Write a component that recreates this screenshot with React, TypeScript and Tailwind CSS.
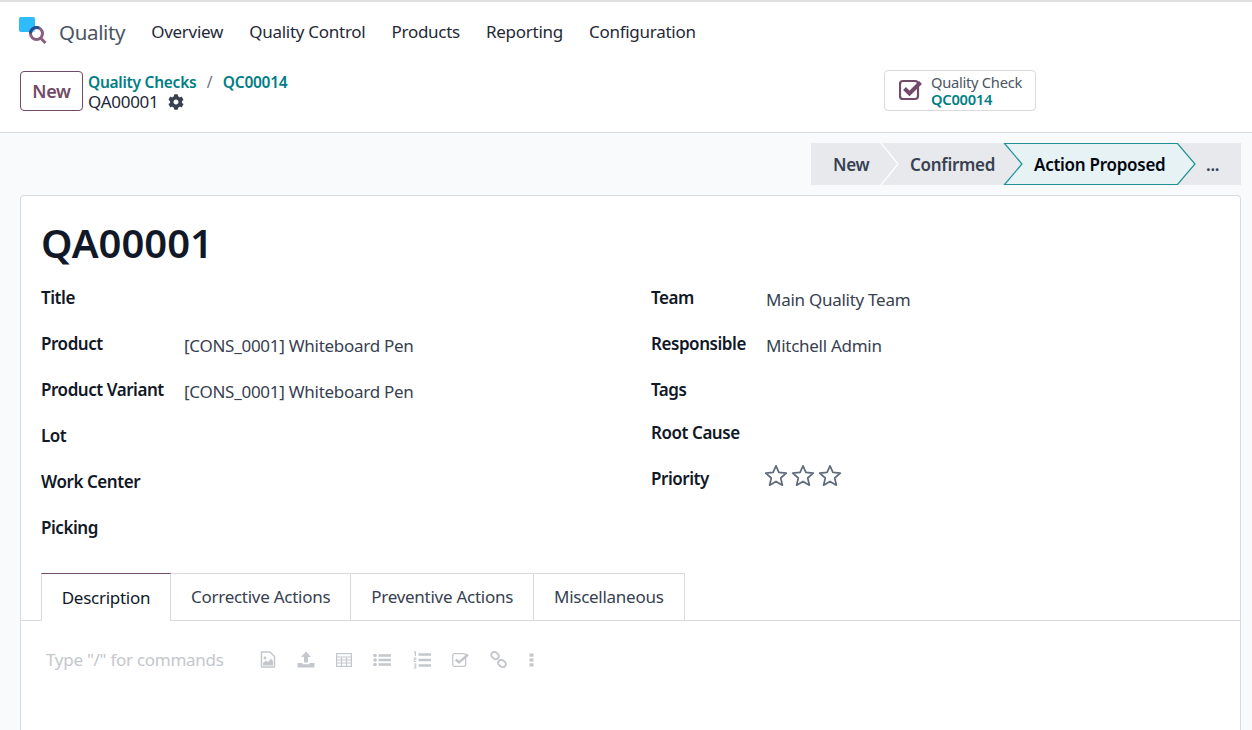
import { FaCog } from "react-icons/fa";

const menu = ["Overview", "Quality Control", "Products", "Reporting", "Configuration"];
const tabs = ["Corrective Actions", "Preventive Actions", "Miscellaneous"];

function Logo() {
  return (
    <svg width="30" height="30" viewBox="0 0 30 30" className="shrink-0">
      <path d="M2 0 H14 Q16 0 16 2 V15 H2 Q0 15 0 13 V2 Q0 0 2 0 Z" fill="#2ebcfa" />
      <circle cx="17.500" cy="16.500" r="6.500" fill="#fff" />
      <path d="M11 16.500 A6.500 6.500 0 0 1 16 10.200 L16 15 L11 15 Z" fill="#9adcf8" />
      <circle cx="17.500" cy="16.500" r="6" fill="none" stroke="#8b5e80" strokeWidth="3" />
      <path d="M11.500 16.500 A6 6 0 0 1 20 11" fill="none" stroke="#1f4f96" strokeWidth="3" />
      <path d="M22 21.500 L26.500 26" stroke="#8b5e80" strokeWidth="3" />
    </svg>
  );
}

function CheckBoxIcon() {
  return (
    <svg width="24" height="23" viewBox="0 0 24 23" className="-mt-[3px] shrink-0">
      <rect x="1" y="3" width="18" height="18" rx="3" fill="none" stroke="#714b67" strokeWidth="2.200" />
      <path d="M5.500 10.500 L10.500 15.500 L21.500 4.500" fill="none" stroke="#714b67" strokeWidth="4" />
    </svg>
  );
}

function Star() {
  return (
    <svg width="24" height="23" viewBox="0 0 24 23">
      <path d="M12 1.800 L14.900 8.400 L22.300 9.100 L16.700 14 L18.400 21.200 L12 17.400 L5.600 21.200 L7.300 14 L1.700 9.100 L9.100 8.400 Z" fill="none" stroke="#5f6b7a" strokeWidth="1.700" strokeLinejoin="round" />
    </svg>
  );
}

function Field({ label, value, left, h }: { label: string; value?: string; left: string; h: string }) {
  return (
    <div className={`flex ${h}`}>
      <div className={`${left} shrink-0 font-semibold tracking-[-0.45px] text-[#111827]`}>{label}</div>
      {value && <div className="pt-[2px] text-[#374151]">{value}</div>}
    </div>
  );
}

function StatusBar() {
  return (
    <div className="flex justify-end pr-[11px] pt-[10px]">
      <div className="relative flex h-[42px] w-[430px] items-center bg-[#e7e9ed] pt-[2px] text-[17px] font-semibold text-[#374151]">
        <svg width="430" height="42" viewBox="0 0 430 42" className="absolute left-0 top-0">
          <path d="M70 0 L87 21 L70 42" fill="none" stroke="#fff" strokeWidth="1.2" />
          <path d="M193.500 0.500 L366.500 0.500 L384 21 L366.500 41.500 L193.500 41.500 L211 21 Z" fill="#e6f2f3" stroke="#1f9297" strokeWidth="1.2" />
        </svg>
        <span className="relative ml-[22px] w-[77px]">New</span>
        <span className="relative w-[124px]">Confirmed</span>
        <span className="relative w-[172px] text-[#030712]">Action Proposed</span>
        <span className="relative">...</span>
      </div>
    </div>
  );
}

function EditorIcons() {
  return (
    <div className="flex items-center text-[#c4c7cc]">
      <svg width="16" height="17" viewBox="0 0 16 17" fill="none">
        <path d="M1.500 1 H10 L14.500 5.500 V16 H1.500 Z" stroke="currentColor" strokeWidth="1.500" />
        <path d="M3 14.500 V12 L6 9.500 L8 11 L11 7.500 L13 10 V14.500 Z" fill="currentColor" />
        <circle cx="5" cy="7" r="1.400" fill="currentColor" />
      </svg>
      <svg width="18" height="17" viewBox="0 0 18 17" className="ml-[21px]" fill="currentColor">
        <path d="M9 0.500 L14 6 H11 V11.500 H7 V6 H4 Z" />
        <path d="M0.500 12 H5.500 V13.200 H12.500 V12 H17.500 V16.500 H0.500 Z" />
      </svg>
      <svg width="16" height="14" viewBox="0 0 16 14" className="ml-[21px]" fill="none" stroke="currentColor" strokeWidth="1.200">
        <rect x="0.600" y="0.600" width="14.800" height="12.800" />
        <path d="M0.600 4 H15.400 M0.600 7 H15.400 M0.600 10 H15.400 M5.500 4 V13.400 M10.500 4 V13.400" />
      </svg>
      <svg width="18" height="14" viewBox="0 0 18 14" className="ml-[21px]" fill="currentColor">
        <circle cx="2" cy="2.500" r="1.800" />
        <circle cx="2" cy="7" r="1.800" />
        <circle cx="2" cy="11.500" r="1.800" />
        <path d="M5.500 1.300 H18 V3.700 H5.500 Z M5.500 5.800 H18 V8.200 H5.500 Z M5.500 10.300 H18 V12.700 H5.500 Z" />
      </svg>
      <svg width="18" height="18" viewBox="0 0 18 18" className="ml-[22px]" fill="currentColor">
        <path d="M1 0.500 H3 V5 H1.800 V1.700 H1 Z M0.800 6.500 H3.300 V9 H1.800 V10 H3.300 V11 H0.800 V8.200 H2.300 V7.500 H0.800 Z M0.800 12.500 H3.300 V17.500 H0.800 V16.500 H2.300 V15.500 H1.200 V14.500 H2.300 V13.500 H0.800 Z" />
        <path d="M5.500 2.300 H18 V4.700 H5.500 Z M5.500 7.800 H18 V10.200 H5.500 Z M5.500 13.300 H18 V15.700 H5.500 Z" />
      </svg>
      <svg width="18" height="15" viewBox="0 0 18 15" className="ml-[21px]" fill="none" stroke="currentColor">
        <rect x="0.700" y="1.700" width="13" height="12.600" rx="2" strokeWidth="1.300" />
        <path d="M3.800 7.500 L7 10.500 L16 2.500" strokeWidth="2.400" />
      </svg>
      <svg width="17" height="17" viewBox="0 0 17 17" className="ml-[20px]" fill="none" stroke="currentColor" strokeWidth="1.900">
        <rect x="1" y="1.500" width="8" height="6" rx="3" transform="rotate(40 5 4.500)" />
        <rect x="8" y="9.500" width="8" height="6" rx="3" transform="rotate(40 12 12.500)" />
      </svg>
      <svg width="5" height="14" viewBox="0 0 5 14" className="ml-[22px]" fill="currentColor">
        <rect x="0.500" y="0.500" width="4" height="3.200" />
        <rect x="0.500" y="5.400" width="4" height="3.200" />
        <rect x="0.500" y="10.300" width="4" height="3.200" />
      </svg>
    </div>
  );
}

export default function App() {
  return (
    <div className="flex h-[730px] w-[1252px] flex-col overflow-hidden bg-[#f9fafb] font-['Noto_Sans',sans-serif] text-[17px] tracking-[-0.27px] text-[#374151]">
      <header className="h-[133px] shrink-0 border-t-2 border-b border-t-[#e0e0e0] border-b-[#d8dadd] bg-white">
        <nav className="flex h-[60px] items-center pl-[19px]">
          <Logo />
          <span className="ml-[10px] mr-[26px] text-[20.500px] tracking-[-0.35px] text-[#4b5563]">Quality</span>
          <div className="flex gap-[26px] text-[#1f2937]">
            {menu.map((item) => (
              <span key={item}>{item}</span>
            ))}
          </div>
        </nav>
        <div className="flex items-center pl-[20px] pt-[8px]">
          <button className="h-[40px] w-[63px] rounded border border-[#714b67] text-[18px] font-semibold text-[#714b67]">New</button>
          <div className="ml-[5px] w-[796px] pt-[2px] leading-[20px]">
            <div className="flex text-[15.500px] font-semibold text-[#017e84]">
              <span>Quality Checks</span>
              <span className="mx-[10.500px] font-normal text-[#6b7280]">/</span>
              <span>QC00014</span>
            </div>
            <div className="flex items-center gap-[9px] text-[#1f2937]">
              QA00001
              <FaCog className="text-[16px] text-[#374151]" />
            </div>
          </div>
          <div className="-mt-[1px] flex h-[41px] w-[152px] items-center rounded border border-[#d8dadd] pl-[14px]">
            <CheckBoxIcon />
            <div className="ml-[8px] text-[14.700px] leading-[17px]">
              <div className="text-[#4b5563]">Quality Check</div>
              <div className="font-semibold text-[#017e84]">QC00014</div>
            </div>
          </div>
        </div>
      </header>

      <StatusBar />

      <main className="ml-[20px] mr-[11px] mt-[10px] flex-1 rounded-t border border-b-0 border-[#d8dadd] bg-white">
        <h1 className="pl-[20px] pt-[17px] text-[40px] font-semibold leading-[60px] tracking-normal text-[#111827]">QA00001</h1>
        <div className="mt-[12px] flex pl-[20px]">
          <div className="w-[610px]">
            <Field label="Title" left="w-[143px]" h="h-[46px]" />
            <Field label="Product" value="[CONS_0001] Whiteboard Pen" left="w-[143px]" h="h-[46px]" />
            <Field label="Product Variant" value="[CONS_0001] Whiteboard Pen" left="w-[143px]" h="h-[46px]" />
            <Field label="Lot" left="w-[143px]" h="h-[46px]" />
            <Field label="Work Center" left="w-[143px]" h="h-[46px]" />
            <Field label="Picking" left="w-[143px]" h="h-[46px]" />
          </div>
          <div>
            <Field label="Team" value="Main Quality Team" left="w-[115px]" h="h-[46px]" />
            <Field label="Responsible" value="Mitchell Admin" left="w-[115px]" h="h-[46px]" />
            <Field label="Tags" left="w-[115px]" h="h-[43px]" />
            <Field label="Root Cause" left="w-[115px]" h="h-[46px]" />
            <div className="flex h-[46px]">
              <div className="w-[113px] font-semibold tracking-[-0.45px] text-[#111827]">Priority</div>
              <div className="-mt-[2px] flex h-[23px] gap-[3px]">
                <Star />
                <Star />
                <Star />
              </div>
            </div>
          </div>
        </div>

        <div className="mt-[12px] flex h-[48px] border-b border-[#d8dadd] pl-[20px]">
          <div className="-mb-px flex h-[48px] w-[130px] items-center justify-center border-x border-t border-x-[#d8dadd] border-t-[#714b67] bg-white text-[#111827]">Description</div>
          {tabs.map((tab) => (
            <div key={tab} className="flex h-[47px] items-center border-r border-t border-[#d8dadd] px-[20px]">
              {tab}
            </div>
          ))}
        </div>

        <div className="flex items-center pl-[25px] pt-[26px] text-[#c4c7cc]">
          <span className="w-[214px]">Type "/" for commands</span>
          <EditorIcons />
        </div>
      </main>
    </div>
  );
}
